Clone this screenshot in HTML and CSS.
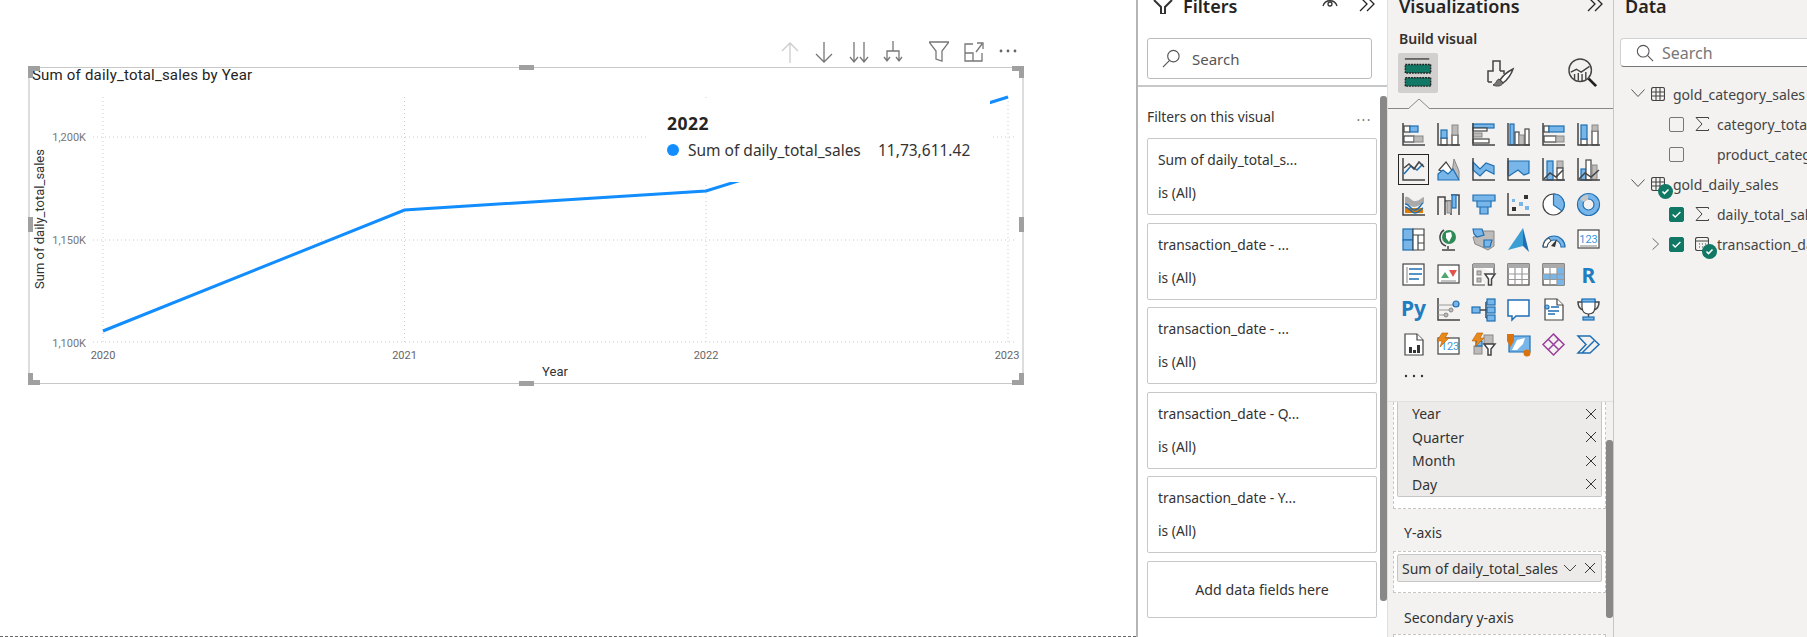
FILE: index.html
```html
<!DOCTYPE html>
<html>
  <head>
    <title>Report view</title>
    <meta name="viewport" content="width=device-width, initial-scale=1.0">
    <link rel="stylesheet" href="styles.css">
  </head>
  <body>
    <div class="mainbody">
      <!-- report canvas -->
      <div class="canvas">
        <div class="vistools">
          <svg class="tool faded" viewBox="0 0 20 24"><path d="M10 23V3M2 11l8-8 8 8"/></svg>
          <svg class="tool" viewBox="0 0 20 24"><path d="M10 2v20M2 14l8 8 8-8"/></svg>
          <svg class="tool" viewBox="0 0 20 24"><path d="M5 2v20M1 17l4 5 4-5M15 2v20M11 17l4 5 4-5"/></svg>
          <svg class="tool" viewBox="0 0 20 24"><path d="M10 1v10M4 20v-9h12v9M1 17l3 4 3-4M13 17l3 4 3-4"/></svg>
          <svg class="tool gapl" viewBox="0 0 20 24"><path d="M0 2h20l-7 9v10l-6-2v-8z"/></svg>
          <svg class="tool" viewBox="0 0 20 24"><path d="M18 13v8H1V4h8M1 13h8v8M12 12l6-8M13 3h6v6"/></svg>
          <svg class="tool dots" viewBox="0 0 20 24"><circle cx="3" cy="11" r="1.4"/><circle cx="10" cy="11" r="1.4"/><circle cx="17" cy="11" r="1.4"/></svg>
        </div>
        <div class="visual">
          <svg class="chart" viewBox="28 67 996 317">
            <g class="grid">
              <path d="M93 137H1015M93 240H1015M93 342H1015M103 97V342M404.500 97V342M706 97V342M1008 97V342"/>
            </g>
            <path class="serie" d="M103 331L404.500 210L706 191L1008 97"/>
            <text class="title" x="32" y="80">Sum of daily_total_sales by Year</text>
            <text class="ytick" x="86" y="141">1,200K</text>
            <text class="ytick" x="86" y="244">1,150K</text>
            <text class="ytick" x="86" y="347">1,100K</text>
            <text class="xtick" x="103" y="359">2020</text>
            <text class="xtick" x="404.500" y="359">2021</text>
            <text class="xtick" x="706" y="359">2022</text>
            <text class="xtick" x="1007" y="359">2023</text>
            <text class="axname" x="555" y="376">Year</text>
            <text class="axname" transform="translate(44 219) rotate(-90)">Sum of daily_total_sales</text>
          </svg>
          <div class="tooltip">
            <div class="tiphead">2022</div>
            <div class="tiprow"><span class="tipdot"></span><span class="tiplabel">Sum of daily_total_sales</span><span>11,73,611.42</span></div>
          </div>
          <span class="handle hl"></span><span class="handle hr"></span><span class="handle ht"></span><span class="handle hb"></span>
          <span class="corner ctl"></span><span class="corner ctr"></span><span class="corner cbl"></span><span class="corner cbr"></span>
        </div>
      </div>

      <!-- filters pane -->
      <div class="filterspane">
        <div class="panehead">
          <svg class="headicon" viewBox="0 0 20 14"><path d="M1 0L8 7v7h4V7l7-7"/></svg>
          <span>Filters</span>
          <svg class="eye" viewBox="0 0 16 12"><path d="M1 8C3 1 13 1 15 8"/><circle cx="8" cy="6" r="2"/></svg>
          <svg class="chev" viewBox="0 0 16 14"><path d="M1 -2l7 7-7 7M8 -2l7 7-7 7"/></svg>
        </div>
        <div class="fsearch">
          <svg class="lens" viewBox="0 0 20 20"><circle cx="12" cy="7.500" r="6"/><path d="M8 12L1 19"/></svg>
          <span>Search</span>
        </div>
        <div class="fsep"></div>
        <div class="fonvisual"><span>Filters on this visual</span><span class="fmore">...</span></div>
        <div class="cards">
          <div class="card"><div>Sum of daily_total_s...</div><div>is (All)</div></div>
          <div class="card"><div>transaction_date - ...</div><div>is (All)</div></div>
          <div class="card"><div>transaction_date - ...</div><div>is (All)</div></div>
          <div class="card"><div>transaction_date - Q...</div><div>is (All)</div></div>
          <div class="card"><div>transaction_date - Y...</div><div>is (All)</div></div>
          <div class="addcard">Add data fields here</div>
        </div>
        <div class="scroll scrollf"></div>
      </div>

      <!-- visualizations pane -->
      <div class="vizpane">
        <div class="panehead">
          <span>Visualizations</span>
          <svg class="chev" viewBox="0 0 16 14"><path d="M1 -2l7 7-7 7M8 -2l7 7-7 7"/></svg>
        </div>
        <div class="buildlabel">Build visual</div>
        <div class="tabs">
          <div class="tab on">
            <svg viewBox="0 0 30 32"><path class="ln" d="M1 1h26" /><rect x="1.500" y="7" width="27" height="9" fill="#117865" stroke="#222" stroke-width="1.500" stroke-dasharray="2 1"/><rect x="1.500" y="21" width="27" height="9" fill="#117865" stroke="#222" stroke-width="1.500" stroke-dasharray="2 1"/></svg>
          </div>
          <div class="tab">
            <svg viewBox="0 0 30 30"><path class="ln" d="M2 24V13h5V3h7v10M14 13h4v3M2 24h4"/><path d="M27 11c-6 3-11 8-13 11l3 3c4-3 8-8 10-14z" fill="#fff" stroke="#444" stroke-width="1.500"/><path d="M13 21c-3 1-2 4-6 6 4 2 9 1 10-2z" fill="#777" stroke="#444"/></svg>
          </div>
          <div class="tab">
            <svg viewBox="0 0 32 32"><circle class="ln" cx="13" cy="13" r="12"/><path class="ln" d="M3 15l6-3 5 3 9-6M7 17v6M11 16v8M15 17v8M19 15v8"/><path d="M22 22l8 8" stroke="#222" stroke-width="3"/></svg>
          </div>
        </div>
        <div class="tabline"><svg class="notch" viewBox="0 0 22 11"><path d="M0 11L11 1l11 10"/></svg></div>
        <div class="vizgrid">
          <svg class="vi" viewBox="0 0 23 23"><rect class="wh" x="2" y="3" width="6" height="6"/><rect class="bl" x="8" y="3" width="8" height="6"/><rect class="wh" x="2" y="13" width="10" height="6"/><rect class="gr" x="12" y="13" width="9" height="6"/><path class="ax" d="M1 0v22h22"/></svg>
          <svg class="vi" viewBox="0 0 23 23"><rect class="wh" x="4" y="15" width="6" height="7"/><rect class="bl" x="4" y="7" width="6" height="8"/><rect class="wh" x="15" y="12" width="6" height="10"/><rect class="gr" x="15" y="2" width="6" height="10"/><path class="ax" d="M1 0v22h22"/></svg>
          <svg class="vi" viewBox="0 0 23 23"><rect class="bl" x="1" y="1" width="21" height="4"/><rect class="wh" x="1" y="5" width="14" height="3"/><rect class="gr" x="1" y="10" width="9" height="4"/><rect class="wh" x="1" y="16" width="16" height="4"/><path class="ax" d="M1 0v22h22"/></svg>
          <svg class="vi" viewBox="0 0 23 23"><rect class="bl" x="3" y="1" width="4" height="21"/><rect class="wh" x="8" y="9" width="4" height="13"/><rect class="gr" x="12" y="12" width="5" height="10"/><rect class="wh" x="18" y="6" width="4" height="16"/><path class="ax" d="M1 0v22h22"/></svg>
          <svg class="vi" viewBox="0 0 23 23"><rect class="wh" x="2" y="3" width="5" height="6"/><rect class="bl" x="7" y="3" width="15" height="6"/><rect class="wh" x="2" y="13" width="12" height="6"/><rect class="gr" x="14" y="13" width="8" height="6"/><path class="ax" d="M1 0v22h22"/></svg>
          <svg class="vi" viewBox="0 0 23 23"><rect class="wh" x="4" y="16" width="6" height="6"/><rect class="bl" x="4" y="2" width="6" height="14"/><rect class="wh" x="15" y="8" width="6" height="14"/><rect class="gr" x="15" y="2" width="6" height="6"/><path class="ax" d="M1 0v22h22"/></svg>

          <span class="vibox"><svg class="vi" viewBox="0 0 23 23"><path class="ax" d="M1 0v22h22"/><path class="lnb" d="M2 16l7-8 6 4 6-6"/><path class="ln" d="M2 10l5-4 5 5 5-7 5 5"/></svg></span>
          <svg class="vi" viewBox="0 0 23 23"><path class="gr" d="M14 21L17 1l5 12v8z"/><path class="wh" d="M2 12L9 4l7 10-2 3z"/><path class="bl" d="M1 16L6 12l5 4 5-5 6 11H1z"/></svg>
          <svg class="vi" viewBox="0 0 23 23"><path class="bl" d="M1 4l7 7 6-6 8 3v8l-8-4-6 6-7-6z"/><path class="ax" d="M1 0v22h22"/></svg>
          <svg class="vi" viewBox="0 0 23 23"><path class="bl" d="M1 3h21v12l-5 2-6-5-9 6-1-1z"/><path class="ax" d="M1 0v22h22"/></svg>
          <svg class="vi" viewBox="0 0 23 23"><rect class="bl" x="5" y="3" width="6" height="19"/><rect class="gr" x="15" y="3" width="6" height="7"/><rect class="wh" x="15" y="10" width="6" height="12"/><path class="ax" d="M1 0v22h22"/><path class="ln" d="M2 21l6-6 6 4 7-7"/></svg>
          <svg class="vi" viewBox="0 0 23 23"><rect class="bl" x="4" y="11" width="5" height="11"/><rect class="wh" x="9" y="2" width="5" height="20"/><rect class="gr" x="15" y="7" width="5" height="15"/><path class="ax" d="M1 0v22h22"/><path class="ln" d="M2 21l6-6 6 4 8-7"/></svg>

          <svg class="vi" viewBox="0 0 23 23"><path class="ax" d="M1 0v22h22"/><path d="M3 15h18v5H3z" fill="#e07b00"/><path d="M3 4c5-2 6 5 11 4 3 0 5-3 8-4v6c-4 1-6 4-10 4-4 0-5-4-9-3z" fill="#aaa"/><path class="lnb" d="M3 11c5-1 5 7 10 6 4 0 5-5 8-7"/><path class="lnb" d="M3 14c4 0 6 6 10 6 4 0 6-4 8-5"/></svg>
          <svg class="vi" viewBox="0 0 23 23"><path class="ax" d="M1 22V4h7v18M8 8h6v14M14 2h8v20"/><rect class="bl" x="15" y="2" width="4" height="13"/><rect class="gr" x="10" y="8" width="4" height="12"/></svg>
          <svg class="vi" viewBox="0 0 23 23"><path class="bl" d="M1 2h22v6H1zM5 8h14v6H5zM8 14h8v7H8z"/></svg>
          <svg class="vi" viewBox="0 0 23 23"><path class="ax" d="M1 0v22h22"/><rect x="5" y="14" width="4" height="4" fill="#333"/><rect class="pt" x="5" y="6" width="3" height="3"/><rect class="pt" x="12" y="9" width="4" height="4"/><rect class="pt" x="18" y="13" width="4" height="4"/><rect x="17" y="2" width="4" height="4" fill="#333"/></svg>
          <svg class="vi" viewBox="0 0 23 23"><circle class="wh" cx="11.500" cy="11.500" r="10.500"/><path class="bl" d="M11.500 1A10.500 10.500 0 0 1 20 18l-8.500-6z"/></svg>
          <svg class="vi" viewBox="0 0 23 23"><circle cx="11.500" cy="11.500" r="8" fill="none" stroke="#78b6ea" stroke-width="5"/><circle class="rim" cx="11.500" cy="11.500" r="11"/><circle class="rim" cx="11.500" cy="11.500" r="5.500"/><path d="M3 6a10 10 0 0 1 8-4v5a5 5 0 0 0-4 2z" fill="#c8c6c4"/></svg>

          <svg class="vi" viewBox="0 0 23 23"><rect class="bl" x="1" y="1" width="10" height="11"/><rect class="bl" x="1" y="12" width="10" height="10"/><path class="wh" d="M11 1h11v21H11zM11 7h11M16 7v15M16 15h6"/></svg>
          <svg class="vi" viewBox="0 0 23 23"><circle cx="12" cy="9" r="7" fill="#2e8b57"/><path d="M9 5l5-1 1 4-3 6-3-4z" fill="#fff"/><path class="ln" d="M7 2a9 9 0 0 0 2 16M11 18v3M5 22h13"/></svg>
          <svg class="vi" viewBox="0 0 23 23"><path class="gr" d="M8 3l14 0 0 15-6 4-6-3-7-3-2-7 5-1z"/><path class="bl" d="M1 1h9l2 6-7 2-3-3zM12 12h8l-2 7-6 0z"/></svg>
          <svg class="vi" viewBox="0 0 23 23"><path d="M16 0v18L1 22z" fill="#3b9ed4"/><path d="M16 0l6 24-6-6z" fill="#1f6fb2"/></svg>
          <svg class="vi" viewBox="0 0 23 23"><path class="bl" d="M1 19a11 11 0 0 1 22 0h-4a7 7 0 0 0-14 0z"/><path d="M1 19a11 11 0 0 1 6-9l2 3a7 7 0 0 0-4 6z" fill="#fff" stroke="#444"/><path d="M9 18l6-7-2 8z" fill="#333"/></svg>
          <svg class="vi" viewBox="0 0 23 23"><rect class="wh" x="1" y="2" width="21" height="18"/><text class="cardno" x="11.500" y="15">123</text><path class="gline" d="M3 18h17"/></svg>

          <svg class="vi" viewBox="0 0 23 23"><rect class="wh" x="1" y="1" width="21" height="21"/><path class="gline" d="M5 4v16"/><path class="lnb" d="M7 6h13M7 11h13M7 16h10"/></svg>
          <svg class="vi" viewBox="0 0 23 23"><rect class="wh" x="1" y="2" width="21" height="18"/><path d="M4 15l4-6 4 6z" fill="#4fa56e"/><path d="M12 7h8l-4 7z" fill="#e3524c"/><path class="gline" d="M4 18h15"/></svg>
          <svg class="vi" viewBox="0 0 23 23"><path class="wh" d="M1 1h21v9M1 1v21h12"/><rect x="1" y="1" width="21" height="4" fill="#aaa"/><rect class="gr" x="5" y="8" width="4" height="4"/><rect class="gr" x="5" y="15" width="4" height="4"/><path d="M13 11h10l-3.500 5v6h-3v-6z" fill="#fff" stroke="#444" stroke-width="1.500"/></svg>
          <svg class="vi" viewBox="0 0 23 23"><rect class="wh" x="1" y="1" width="21" height="21"/><rect x="1" y="1" width="21" height="4" fill="#aaa"/><path class="gline" d="M8 5v17M15 5v17M1 11h21M1 16.500h21"/></svg>
          <svg class="vi" viewBox="0 0 23 23"><rect class="wh" x="1" y="1" width="21" height="21"/><rect x="15" y="5" width="7" height="17" fill="#78b6ea"/><rect x="1" y="11" width="21" height="6" fill="#78b6ea"/><rect x="1" y="1" width="21" height="4" fill="#aaa"/><path class="gline" d="M8 5v17M15 5v17M1 11h21M1 16.500h21"/></svg>
          <svg class="vi" viewBox="0 0 23 23"><text class="rpy" x="11.500" y="20">R</text></svg>

          <svg class="vi wide" viewBox="0 0 23 23"><text class="rpy" x="11.500" y="18">Py</text></svg>
          <svg class="vi" viewBox="0 0 23 23"><path class="ax" d="M1 0v22h22"/><path class="gline" d="M1 7h17M1 12h12M1 17h8"/><circle class="bl" cx="19" cy="6" r="3"/><circle class="gr" cx="14" cy="12" r="2"/><circle class="gr" cx="9" cy="17" r="2"/></svg>
          <svg class="vi" viewBox="0 0 23 23"><rect class="bl" x="0" y="9" width="8" height="6"/><path class="ln" d="M8 12h6M14 4v16M14 4h2M14 12h2M14 20h2"/><rect class="bl" x="15" y="1" width="8" height="6"/><rect class="bl" x="15" y="9" width="8" height="6"/><rect class="bl" x="15" y="17" width="8" height="6"/></svg>
          <svg class="vi" viewBox="0 0 23 23"><path class="qa" d="M1 2h21v16H9l-4 4v-4H1z"/></svg>
          <svg class="vi" viewBox="0 0 23 23"><path class="wh" d="M3 1h12l6 6v15H3z"/><path class="wh" d="M15 1v6h6"/><circle class="bl" cx="5" cy="9" r="2"/><path class="lnb" d="M9 9h8M6 13h11M6 16h7"/></svg>
          <svg class="vi" viewBox="0 0 23 23"><path class="wh" d="M5 2h13v7c0 5-3 7-6.500 7S5 14 5 9z"/><path class="ln" d="M5 4H1c0 5 2 7 5 8M18 4h4c0 5-2 7-5 8M11.500 16v3"/><rect class="bl" x="5" y="1" width="13" height="3"/><rect class="bl" x="6" y="19" width="11" height="3"/></svg>

          <svg class="vi" viewBox="0 0 23 23"><path class="wh" d="M3 1h12l6 6v15H3z"/><path class="wh" d="M15 1v6h6"/><rect x="7" y="14" width="3" height="6" fill="#333"/><rect x="11" y="17" width="3" height="3" fill="#333"/><rect x="15" y="12" width="3" height="8" fill="#333"/></svg>
          <svg class="vi" viewBox="0 0 23 23"><rect class="wh" x="1" y="5" width="21" height="16"/><text class="cardno" x="13" y="17">123</text><path class="bolt" d="M5 0h6L8 5h4L3 14l2-6H0z"/></svg>
          <svg class="vi" viewBox="0 0 23 23"><rect class="gr" x="12" y="2" width="9" height="9"/><rect class="gr" x="2" y="13" width="8" height="8"/><rect class="bl" x="4" y="8" width="6" height="5"/><path d="M12 11h11l-4 5v6h-3v-6z" fill="#fff" stroke="#444" stroke-width="1.500"/><path class="bolt" d="M5 0h6L8 5h4L3 14l2-6H0z"/></svg>
          <svg class="vi" viewBox="0 0 23 23"><path class="bl" d="M2 3h21v16H2z"/><path d="M10 7l8-2-2 6-6 6H5z" fill="#fff"/><path d="M0 1h7v7l-3.500 6L0 8z" fill="#d9730d"/><circle cx="20" cy="20" r="3.500" fill="#d9730d"/></svg>
          <svg class="vi" viewBox="0 0 23 23"><path class="pa" d="M11.500 1L22 11.500 11.500 22 1 11.500zM11.500 1l5 5.500-10 10M6.500 6.500l10 10"/></svg>
          <svg class="vi" viewBox="0 0 23 23"><path class="lnb" d="M1 3h12l9 8.500-9 8.500H1l8-8.500zM5 20l12-12"/></svg>
        </div>
        <svg class="vizmore" viewBox="0 0 20 4"><circle cx="2" cy="2" r="1.200"/><circle cx="10" cy="2" r="1.200"/><circle cx="18" cy="2" r="1.200"/></svg>
        <div class="fields">
          <div class="well wellx">
            <div class="chipgroup">
              <div class="chiprow"><span>Year</span><svg class="x" viewBox="0 0 10 10"><path d="M0 0l10 10M10 0L0 10"/></svg></div>
              <div class="chiprow"><span>Quarter</span><svg class="x" viewBox="0 0 10 10"><path d="M0 0l10 10M10 0L0 10"/></svg></div>
              <div class="chiprow"><span>Month</span><svg class="x" viewBox="0 0 10 10"><path d="M0 0l10 10M10 0L0 10"/></svg></div>
              <div class="chiprow"><span>Day</span><svg class="x" viewBox="0 0 10 10"><path d="M0 0l10 10M10 0L0 10"/></svg></div>
            </div>
          </div>
          <div class="welllabel">Y-axis</div>
          <div class="well welly">
            <div class="chip">
              <span>Sum of daily_total_sales</span>
              <svg class="chipchev" viewBox="0 0 14 8"><path d="M1 1l6 6 6-6"/></svg>
              <svg class="x" viewBox="0 0 10 10"><path d="M0 0l10 10M10 0L0 10"/></svg>
            </div>
          </div>
          <div class="welllabel second">Secondary y-axis</div>
          <div class="well wellz"></div>
        </div>
        <div class="scroll scrollv"></div>
      </div>

      <!-- data pane -->
      <div class="datapane">
        <div class="panehead"><span>Data</span></div>
        <div class="dsearch">
          <svg class="lens dl" viewBox="0 0 20 20"><circle cx="8" cy="8" r="6.500"/><path d="M13 13l6 6"/></svg>
          <span>Search</span>
        </div>
        <div class="tree">
          <div class="trow">
            <svg class="tchev" viewBox="0 0 14 14"><path d="M0.500 2.500l6.500 7 6.500-7"/></svg>
            <svg class="ticon" viewBox="0 0 14 14"><rect x="0.500" y="0.500" width="13" height="13" rx="2"/><path d="M5 0v14M9 0v14M0 5h14M0 9h14"/></svg>
            <span>gold_category_sales</span>
          </div>
          <div class="trow field">
            <span class="tslot"></span><span class="cb"></span>
            <svg class="sigma" viewBox="0 0 14 14"><path d="M13.500 2V0.500H1l6 6.500-6 6.500h12.500V12"/></svg>
            <span>category_total_sales</span>
          </div>
          <div class="trow field">
            <span class="tslot"></span><span class="cb"></span><span class="sigma"></span><span>product_category</span>
          </div>
          <div class="trow">
            <svg class="tchev" viewBox="0 0 14 14"><path d="M0.500 2.500l6.500 7 6.500-7"/></svg>
            <span class="iconwrap">
              <svg class="ticon" viewBox="0 0 14 14"><rect x="0.500" y="0.500" width="13" height="13" rx="2"/><path d="M5 0v14M9 0v14M0 5h14M0 9h14"/></svg>
              <svg class="okbadge" viewBox="0 0 15 15"><circle cx="7.500" cy="7.500" r="7.500"/><path d="M4.500 7.500l2 2 4-4"/></svg>
            </span>
            <span>gold_daily_sales</span>
          </div>
          <div class="trow field">
            <span class="tslot"></span>
            <span class="cb on"><svg viewBox="0 0 15 15"><path d="M3 7.500l3 3 6-6"/></svg></span>
            <svg class="sigma" viewBox="0 0 14 14"><path d="M13.500 2V0.500H1l6 6.500-6 6.500h12.500V12"/></svg>
            <span>daily_total_sales</span>
          </div>
          <div class="trow field">
            <span class="tslot"><svg class="tchev side" viewBox="0 0 14 14"><path d="M3 0.500l7 6.500-7 6.500"/></svg></span>
            <span class="cb on"><svg viewBox="0 0 15 15"><path d="M3 7.500l3 3 6-6"/></svg></span>
            <span class="iconwrap slotw">
              <svg class="ticon" viewBox="0 0 14 14"><rect x="0.500" y="0.500" width="13" height="13" rx="2"/><path d="M0 4h14M4 7h1M7 7h1M10 7h1M4 10h1M7 10h1M10 10h1"/></svg>
              <svg class="okbadge" viewBox="0 0 15 15"><circle cx="7.500" cy="7.500" r="7.500"/><path d="M4.500 7.500l2 2 4-4"/></svg>
            </span>
            <span>transaction_date</span>
          </div>
        </div>
      </div>
    </div>
  </body>
</html>
```

FILE: styles.css
```css
*{box-sizing:border-box;margin:0;padding:0;}
body{overflow:hidden;font-family:"Noto Sans",sans-serif;color:#333;}
.mainbody{display:flex;height:637px;width:1807px;overflow:hidden;background:#fff;}

/* canvas */
.canvas{width:1136px;height:637px;border-bottom:1px dashed #666;flex:none;}
.vistools{display:flex;justify-content:flex-end;align-items:center;gap:14.5px;height:24px;margin-top:40px;padding-right:118px;margin-bottom:3px;}
.tool{width:20px;height:24px;fill:none;stroke:#777;stroke-width:1.3;}
.tool.faded{stroke:#ccc;}
.tool.gapl{margin-left:11.5px;}
.tool.dots{stroke:none;fill:#666;}
.visual{position:relative;width:996px;height:317px;margin-left:28px;border:1px solid #c8c8c8;border-left:2px solid #ddd;border-right:2px solid #ddd;}
.chart{display:block;position:absolute;left:-2px;top:-1px;width:996px;height:317px;}
.grid path{fill:none;stroke:#ccc;stroke-width:1;stroke-dasharray:1 3;}
.serie{fill:none;stroke:#118dff;stroke-width:3;}
.chart text{font-family:"Roboto",sans-serif;}
.title{font-size:15px;letter-spacing:.2px;fill:#252423;}
.ytick{font-size:11px;fill:#777;text-anchor:end;}
.xtick{font-size:11px;fill:#666;text-anchor:middle;}
.axname{font-size:13px;fill:#333;text-anchor:middle;}
.tooltip{position:absolute;left:616px;top:32px;width:344px;height:82px;background:#fff;padding:13px 0 0 21px;font-size:15.500px;}
.tiphead{font-weight:700;font-size:17.500px;line-height:20px;color:#252423;letter-spacing:.5px;}
.tiprow{display:flex;align-items:center;margin-top:7px;line-height:20px;}
.tipdot{width:12px;height:12px;border-radius:50%;background:#118dff;margin-right:9px;}
.tiplabel{width:190px;}
.handle,.corner{position:absolute;background:#a0a0a0;}
.handle.ht{left:489px;top:-3px;width:15px;height:5px;}
.handle.hb{left:489px;bottom:-3px;width:15px;height:5px;}
.handle.hl{left:-2px;top:149px;width:5px;height:15px;}
.handle.hr{right:-2px;top:149px;width:5px;height:15px;}
.corner{width:12px;height:12px;background:none;border:0 solid #a0a0a0;}
.ctl{left:-2px;top:-2px;border-width:5px 0 0 5px;}
.ctr{right:-2px;top:-2px;border-width:5px 5px 0 0;}
.cbl{left:-2px;bottom:-2px;border-width:0 0 5px 5px;}
.cbr{right:-2px;bottom:-2px;border-width:0 5px 5px 0;}

/* shared pane bits */
.panehead{display:flex;align-items:center;height:12px;line-height:12px;font-size:18px;font-weight:600;color:#252423;white-space:nowrap;}
.chev{width:16px;height:14px;fill:none;stroke:#252423;stroke-width:1.3;flex:none;}
.scroll{position:absolute;width:7px;background:#8a8886;border-radius:3px;}

/* filters */
.filterspane{position:relative;width:251px;flex:none;border-left:2px solid #b5b5b5;height:637px;}
.filterspane .panehead{padding-left:15px;}
.headicon{width:20px;height:14px;fill:none;stroke:#333;stroke-width:2;margin-right:10px;margin-top:2px;}
.eye{width:16px;height:12px;fill:none;stroke:#333;stroke-width:1.3;margin-left:84.5px;margin-top:-4px;}
.filterspane .chev{margin-left:21px;}
.fsearch{display:flex;align-items:center;width:225px;height:41px;margin:26px 0 0 9px;border:1px solid #bbb;border-radius:3px;padding-left:14px;font-size:15px;color:#555;}
.lens{width:19px;height:19px;fill:none;stroke:#555;stroke-width:1.2;margin-right:11px;}
.fsep{height:2px;background:#c8c8c8;margin-top:6px;}
.fonvisual{display:flex;justify-content:space-between;width:225px;margin:21px 0 0 9px;font-size:13.800px;line-height:18px;}
.fmore{letter-spacing:1.500px;line-height:16px;color:#777;}
.cards{display:flex;flex-direction:column;gap:7.500px;width:230px;margin:12px 0 0 9px;}
.card{height:77px;border:1px solid #c8c8c8;border-radius:2px;padding:11px 0 0 10px;font-size:13.800px;line-height:19px;}
.card div+div{margin-top:14px;}
.addcard{height:57px;border:1px solid #c8c8c8;border-radius:2px;display:flex;align-items:center;justify-content:center;font-size:14.200px;padding-top:1px;}
.scrollf{right:0;top:96px;height:505px;}

/* visualizations */
.vizpane{position:relative;width:227px;flex:none;background:#f3f2f1;height:637px;border-left:1px solid #e1dfdd;border-right:1px solid #c8c6c4;}
.vizpane .panehead{padding-left:11px;justify-content:space-between;padding-right:10px;}
.buildlabel{margin:18px 0 0 11px;height:18px;line-height:18px;font-size:14px;font-weight:600;color:#323130;}
.tabs{display:flex;justify-content:space-between;margin:5px 0 0 10px;width:205px;height:40px;}
.tab{width:40px;height:40px;border-radius:2px;display:flex;align-items:center;justify-content:center;}
.tab.on{background:#d2d0ce;}
.tab svg{width:30px;height:30px;}
.tabline{position:relative;height:1px;margin-top:15px;background:#8a8886;}
.notch{position:absolute;left:20px;top:-10px;width:22px;height:11px;fill:#f3f2f1;stroke:#8a8886;}
.vizgrid{display:grid;grid-template-columns:repeat(6,23px);grid-auto-rows:23px;gap:12px;margin:14px 0 0 14px;}
.vi{display:block;width:23px;height:23px;overflow:visible;}
.vibox{display:block;width:23px;height:23px;outline:1.500px solid #252423;outline-offset:3px;}
.ax{fill:none;stroke:#444;stroke-width:1.500;}
.ln{fill:none;stroke:#444;stroke-width:1.500;}
.lnb{fill:none;stroke:#1f6fb2;stroke-width:1.500;}
.bl{fill:#78b6ea;stroke:#1f6fb2;stroke-width:1.200;}
.gr{fill:#bdbbb9;stroke:#8a8886;}
.wh{fill:#fff;stroke:#444;stroke-width:1.200;}
.pt{fill:#78b6ea;}
.rim{fill:none;stroke:#1f6fb2;stroke-width:1.200;}
.gline{fill:none;stroke:#999;stroke-width:1.200;}
.qa{fill:#fff;stroke:#1f6fb2;stroke-width:1.500;}
.pa{fill:none;stroke:#9b3d9e;stroke-width:1.500;}
.bolt{fill:#e8891c;stroke:#b85f00;stroke-width:.6;}
.cardno{font-family:"Roboto",sans-serif;font-size:11px;fill:#3a96dd;text-anchor:middle;}
.rpy{font-family:"Noto Sans",sans-serif;font-weight:700;font-size:21px;fill:#1f7ec0;text-anchor:middle;}
.vizmore{display:block;width:20px;height:4px;margin:18px 0 0 16px;fill:#333;}
.fields{margin-top:23px;border-top:1px solid #e1dfdd;font-size:14px;color:#333;}
.well{width:213px;margin-left:5px;background:#fff;border:1px dashed #c8c6c4;}
.wellx{height:107px;border-top:none;padding:0 3px;}
.chipgroup{background:#edebe9;border:1px solid #c8c6c4;border-top:none;border-radius:0 0 2px 2px;height:95px;}
.chiprow{display:flex;justify-content:space-between;align-items:center;height:23.500px;padding:0 5px 0 14px;}
.x{width:10px;height:10px;fill:none;stroke:#333;stroke-width:1;flex:none;}
.welllabel{margin:15px 0 0 16px;height:18px;line-height:18px;}
.welllabel.second{margin-top:16px;}
.welly{height:42px;margin-top:9px;padding:2px 3px 0;}
.chip{display:flex;align-items:center;height:28px;background:#edebe9;border:1px solid #c8c6c4;border-radius:2px;padding:0 4px;white-space:nowrap;}
.chipchev{width:14px;height:8px;fill:none;stroke:#444;margin:0 8px 0 5px;flex:none;}
.wellz{height:20px;margin-top:7px;border-bottom:none;}
.scrollv{right:0;top:440px;height:178px;}

/* data */
.datapane{flex:1;background:#f3f2f1;height:637px;overflow:hidden;}
.datapane .panehead{padding-left:11px;}
.dsearch{display:flex;align-items:center;width:220px;height:29px;margin:26px 0 0 6px;background:#fff;border:1px solid #d1d1d1;border-bottom:1px solid #777;border-radius:4px;padding:1px 0 0 15px;font-size:16px;color:#777;}
.lens.dl{stroke:#555;width:18px;height:18px;margin-right:8px;}
.tree{margin-top:12px;font-size:14px;color:#444;white-space:nowrap;}
.trow{display:flex;align-items:center;height:30px;padding-left:17px;}
.trow.field{padding-left:36px;}
.tchev{width:14px;height:14px;fill:none;stroke:#555;stroke-width:1;margin-right:6px;flex:none;}
.tchev.side{width:12px;height:14px;margin:0;}
.ticon{display:block;width:14px;height:14px;fill:none;stroke:#444;stroke-width:1.100;margin-right:8px;flex:none;}
.tslot{width:12px;margin-right:7px;flex:none;display:flex;}
.cb{width:15px;height:15px;border:1px solid #777;border-radius:2px;margin-right:11px;flex:none;}
.cb.on{background:#117865;border-color:#117865;}
.cb svg{display:block;width:13px;height:13px;fill:none;stroke:#fff;stroke-width:1.600;}
.sigma{display:block;width:14px;height:14px;margin-right:8px;flex:none;fill:none;stroke:#444;stroke-width:1;}
.iconwrap{position:relative;display:block;}
.slotw{width:22px;flex:none;}
.okbadge{position:absolute;left:7px;top:7px;width:15px;height:15px;fill:#117865;stroke:none;}
.okbadge path{fill:none;stroke:#fff;stroke-width:1.600;}
```
